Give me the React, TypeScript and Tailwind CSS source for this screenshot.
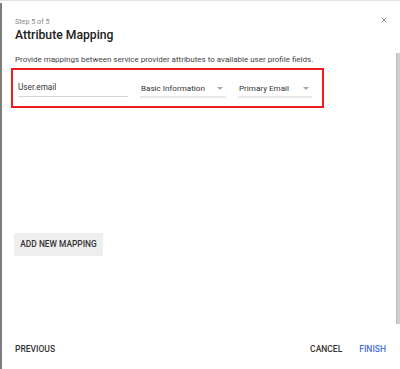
import { X } from 'lucide-react';

function SelectField({ label, width }: { label: string; width: string }) {
    return (
        <div className={`${width} flex flex-col`}>
            <div className="flex items-center justify-between h-[14px] pl-[1px] pr-[3px]">
                <span className="text-[8.1px] text-[#333333]">{label}</span>
                <span className="w-0 h-0 border-l-[3px] border-r-[3px] border-t-[3px] border-l-transparent border-r-transparent border-t-[#a8a8a8]" />
            </div>
            <div className="mt-[1px] h-[2px] bg-[#e8e8e8]" />
        </div>
    );
}

export default function App() {
    return (
        <div className="w-[400px] h-[369px] bg-white border-t border-[#e2e2e2] font-['Roboto',sans-serif] overflow-hidden">
            <div className="mt-[2px] h-[366px] border-l-2 border-[#7d7d7d] flex flex-col">
                <div className="relative h-[50px] pl-[13px] pt-[15px]">
                    <p className="text-[7.2px] leading-[8px] text-[#8a8a8a]">Step 5 of 5</p>
                    <h2 className="mt-[2px] text-[12.2px] leading-[15px] font-medium text-[#212121]">Attribute Mapping</h2>
                    <X size={8} strokeWidth={2.5} className="absolute right-[12px] top-[13px] text-[#7a7a7a]" />
                </div>

                <div className="flex h-[271px]">
                    <div className="flex-1 pl-[13px] pt-[1px]">
                        <p className="text-[8px] leading-[11px] text-[#444444]">
                            Provide mappings between service provider attributes to available user profile fields.
                        </p>
                        <div className="ml-[-4px] mt-[3px] w-[313px] h-[40px] border-2 border-[#ee1c1c] flex items-start pl-[5px] pt-[11px] gap-[12px]">
                            <div className="w-[110px] flex flex-col">
                                <span className="h-[15px] text-[8.2px] leading-[12px] text-[#333333]">User.email</span>
                                <div className="h-[1px] bg-[#d4d4d4]" />
                            </div>
                            <SelectField label="Basic Information" width="w-[86px]" />
                            <SelectField label="Primary Email" width="w-[74px]" />
                        </div>
                        <button className="mt-[125px] ml-[-1px] w-[89px] h-[23px] bg-[#eeeeee] text-[8.4px] font-medium text-[#333333]">
                            ADD NEW MAPPING
                        </button>
                    </div>
                    <div className="w-[4px] bg-[#cfcfcf] border-l border-[#bdbdbd]" />
                </div>

                <div className="flex-1 flex items-center justify-between pl-[13px] pr-[14px] pt-[6px] text-[8.5px] font-medium">
                    <span className="text-[#333333]">PREVIOUS</span>
                    <div className="flex gap-[17px]">
                        <span className="text-[#333333]">CANCEL</span>
                        <span className="text-[#4a6fe3]">FINISH</span>
                    </div>
                </div>
            </div>
        </div>
    );
}
